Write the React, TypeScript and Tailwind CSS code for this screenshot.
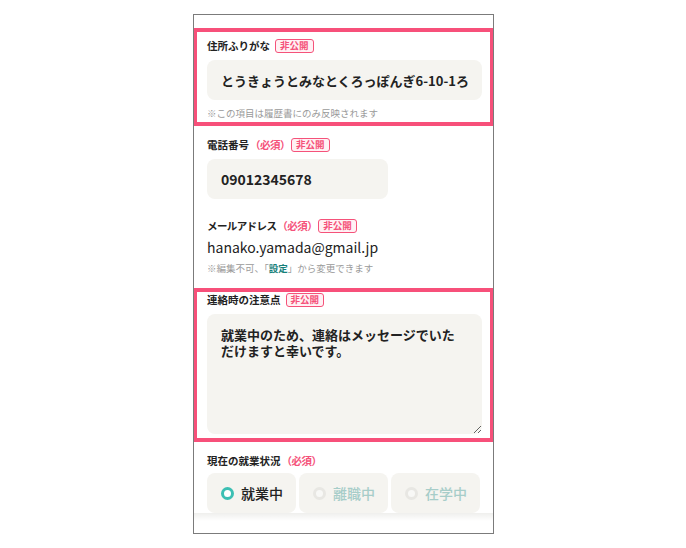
import React from "react";

const font = { fontFamily: '"Noto Sans CJK JP", "Noto Sans", sans-serif' };

function Badge({ tight }: { tight?: boolean }) {
  return (
    <span
      className={
        "inline-flex h-[14px] items-center rounded-[3px] border border-[#f5527a] bg-[#fff1f4] px-[4px] text-[9.5px] font-bold leading-none text-[#f5527a] " +
        (tight ? "ml-[1px]" : "ml-[5px]")
      }
    >
      非公開
    </span>
  );
}

function Req() {
  return (
    <span className="ml-[1px] text-[10.5px] font-bold tracking-[-0.5px] text-[#f5527a]">
      （必須）
    </span>
  );
}

function Label({ children }: { children: React.ReactNode }) {
  return (
    <div className="flex h-[16px] items-center text-[10.5px] font-bold leading-[16px] text-[#222]">
      {children}
    </div>
  );
}

function Radio({ label, active }: { label: string; active?: boolean }) {
  return (
    <div className="flex h-[40px] w-[89px] items-center rounded-[8px] bg-[#f5f4f0] pl-[14px]">
      {active ? (
        <span className="box-border h-[13px] w-[13px] rounded-full border-[3.5px] border-[#3cbfb3] bg-white" />
      ) : (
        <span className="box-border h-[13px] w-[13px] rounded-full border-[3.5px] border-[#e8e7e3] bg-[#f8f8f6]" />
      )}
      <span
        className={
          "ml-[7px] text-[14px] font-medium leading-none " +
          (active ? "text-[#222]" : "text-[#a7cdc9]")
        }
      >
        {label}
      </span>
    </div>
  );
}

export default function App() {
  return (
    <div className="h-[548px] w-[686px] bg-white pt-[14px] pl-[193px]" style={font}>
      <div className="box-border h-[520px] w-[301px] overflow-hidden border border-[#7b7b7b] bg-white">
        <div className="h-[13px]" />
        {/* Section 1 */}
        <div className="-mx-px border-4 border-[#f7507a] pt-[6px] pl-[10px] pr-[7px] pb-[2px]">
          <Label>
            住所ふりがな
            <Badge />
          </Label>
          <input
            readOnly
            value="とうきょうとみなとくろっぽんぎ6-10-1ろっぽんぎひるず"
            className="mt-[6px] box-border h-[40px] w-[275px] rounded-[8px] bg-[#f5f4f0] px-[14px] text-[13px] font-bold text-[#222] outline-none"
            style={font}
          />
          <div className="mt-[6px] h-[14px] text-[9.5px] leading-[14px] text-[#9a9a9a]">
            ※この項目は履歴書にのみ反映されます
          </div>
        </div>
        {/* Section 2 */}
        <div className="pl-[13px] pt-[11px] pb-[13px]">
          <Label>
            電話番号
            <Req />
            <Badge tight />
          </Label>
          <div className="mt-[6px] flex h-[40px] w-[181px] items-center rounded-[8px] bg-[#f5f4f0] px-[14px] text-[14px] font-bold text-[#222]">
            09012345678
          </div>
          <div className="mt-[19px]">
            <Label>
              <span className="tracking-[-0.6px]">メールアドレス</span>
              <Req />
              <Badge tight />
            </Label>
          </div>
          <div className="mt-[3px] h-[20px] text-[14px] leading-[20px] text-[#222]">
            hanako.yamada@gmail.jp
          </div>
          <div className="mt-[4px] h-[14px] text-[9.5px] leading-[14px] text-[#9a9a9a]">
            ※編集不可、「<span className="font-bold text-[#16807a]">設定</span>」から変更できます
          </div>
        </div>
        {/* Section 3 */}
        <div className="-mx-px border-4 border-[#f7507a] pl-[10px] pr-[7px] pb-[4px]">
          <Label>
            連絡時の注意点
            <Badge />
          </Label>
          <textarea
            readOnly
            value={"就業中のため、連絡はメッセージでいただけますと幸いです。"}
            className="mt-[6px] box-border block h-[120px] w-[275px] rounded-[8px] bg-[#f5f4f0] pl-[14px] pr-[20px] pt-[13px] text-[13px] font-bold leading-[16px] text-[#222] outline-none"
            style={font}
          />
        </div>
        {/* Section 4 */}
        <div className="pl-[13px] pt-[11px]">
          <Label>
            現在の就業状況
            <Req />
          </Label>
          <div className="mt-[4px] flex gap-[3px]">
            <Radio label="就業中" active />
            <Radio label="離職中" />
            <Radio label="在学中" />
          </div>
        </div>
        <div className="h-[8px] bg-gradient-to-b from-[#efefed] to-white" />
      </div>
    </div>
  );
}
